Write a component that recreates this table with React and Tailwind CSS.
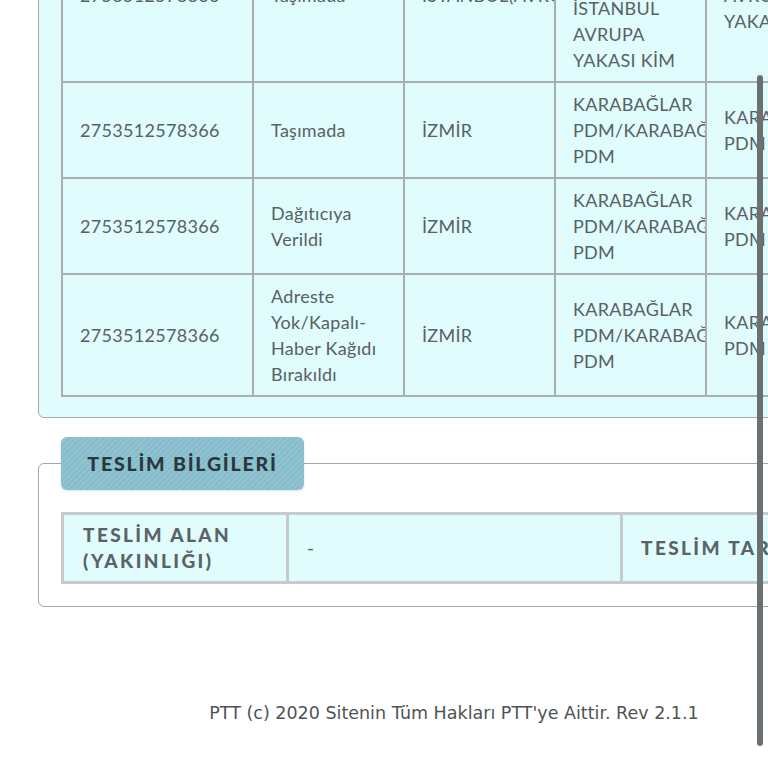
import React from "react";

// hareket satırları (sayfa aşağı kaydırılmış halde)
const hareketler = [
  {
    barkod: "2753512578366",
    islem: ["Taşımada"],
    il: ["İSTANBUL(AVRUPA)"],
    merkez: ["İSTANBUL", "AVRUPA", "YAKASI KİM/", "İSTANBUL", "AVRUPA", "YAKASI KİM"],
    sonraki: ["İSTANBUL", "AVRUPA", "YAKASI"],
  },
  {
    barkod: "2753512578366",
    islem: ["Taşımada"],
    il: ["İZMİR"],
    merkez: ["KARABAĞLAR", "PDM/KARABAĞLAR", "PDM"],
    sonraki: ["KARABAĞLAR", "PDM"],
  },
  {
    barkod: "2753512578366",
    islem: ["Dağıtıcıya", "Verildi"],
    il: ["İZMİR"],
    merkez: ["KARABAĞLAR", "PDM/KARABAĞLAR", "PDM"],
    sonraki: ["KARABAĞLAR", "PDM"],
  },
  {
    barkod: "2753512578366",
    islem: ["Adreste", "Yok/Kapalı-", "Haber Kağıdı", "Bırakıldı"],
    il: ["İZMİR"],
    merkez: ["KARABAĞLAR", "PDM/KARABAĞLAR", "PDM"],
    sonraki: ["KARABAĞLAR", "PDM"],
  },
];

function Hucre({ lines }) {
  return (
    <td className="border-2 border-[#a9afaf] px-[17px] py-[8px] align-middle overflow-hidden">
      {lines.map((l, i) => (
        <div key={i} className="whitespace-nowrap">{l}</div>
      ))}
    </td>
  );
}

export default function App() {
  return (
    <div className="relative w-[768px] h-[768px] overflow-hidden bg-white">
      <div className="w-[908px] -mt-[116px] pl-[38px] font-['Lato',sans-serif]">
        {/* Gönderi hareketleri paneli */}
        <div className="border border-[#a6abab] rounded-md bg-[#e0fcfd] pt-[22px] pl-[22px] pb-[20px] w-[1000px]">
          <table className="table-fixed w-[904px] border-collapse text-[18px] leading-[26px] tracking-[0.3px] text-[#586163]">
            <colgroup>
              <col className="w-[191px]" />
              <col className="w-[151px]" />
              <col className="w-[151px]" />
              <col className="w-[151px]" />
              <col className="w-[260px]" />
            </colgroup>
            <tbody>
              {hareketler.map((h, i) => (
                <tr key={i}>
                  <Hucre lines={[h.barkod]} />
                  <Hucre lines={h.islem} />
                  <Hucre lines={h.il} />
                  <Hucre lines={h.merkez} />
                  <Hucre lines={h.sonraki} />
                </tr>
              ))}
            </tbody>
          </table>
        </div>

        {/* Teslim bilgileri */}
        <fieldset className="mt-[19px] border border-[#a3a8a8] rounded-md pl-[22px] pt-[22px] pb-[22px] w-[1000px]">
          <legend className="w-[243px] h-[53px] flex items-center justify-center rounded-md shadow-sm bg-[repeating-linear-gradient(135deg,#8ec3cf_0px,#8ec3cf_2px,#86bccb_2px,#86bccb_4px)] text-[19.5px] font-black tracking-[1.8px] text-[#2a373c]">
            TESLİM BİLGİLERİ
          </legend>
          <table className="table-fixed w-[859px] border-collapse bg-[#e0fcfd] text-[19px] leading-[26px]">
            <colgroup>
              <col className="w-[225px]" />
              <col className="w-[334px]" />
              <col className="w-[300px]" />
            </colgroup>
            <tbody>
              <tr>
                <td className="border-[3px] border-[#c6cbcb] px-[19px] py-[7px] font-black tracking-[2.4px] text-[#5a6366]">
                  TESLİM ALAN
                  <br />
                  (YAKINLIĞI)
                </td>
                <td className="border-[3px] border-[#c6cbcb] px-[18px] py-[7px] text-[#5a6366]">-</td>
                <td className="border-[3px] border-[#c6cbcb] px-[18px] py-[7px] font-black tracking-[2.4px] text-[#5a6366] whitespace-nowrap">
                  TESLİM TARİHİ
                </td>
              </tr>
            </tbody>
          </table>
        </fieldset>

        <div className="mt-[93px] w-[832px] text-center font-['DejaVu_Sans',sans-serif] text-[17.5px] text-[#4f5355]">
          PTT (c) 2020 Sitenin Tüm Hakları PTT'ye Aittir. Rev 2.1.1
        </div>
      </div>

      {/* kaydırma çubuğu */}
      <div className="absolute left-[757px] top-[75px] w-[6px] h-[671px] rounded-full bg-[#6b7171]" />
    </div>
  );
}
